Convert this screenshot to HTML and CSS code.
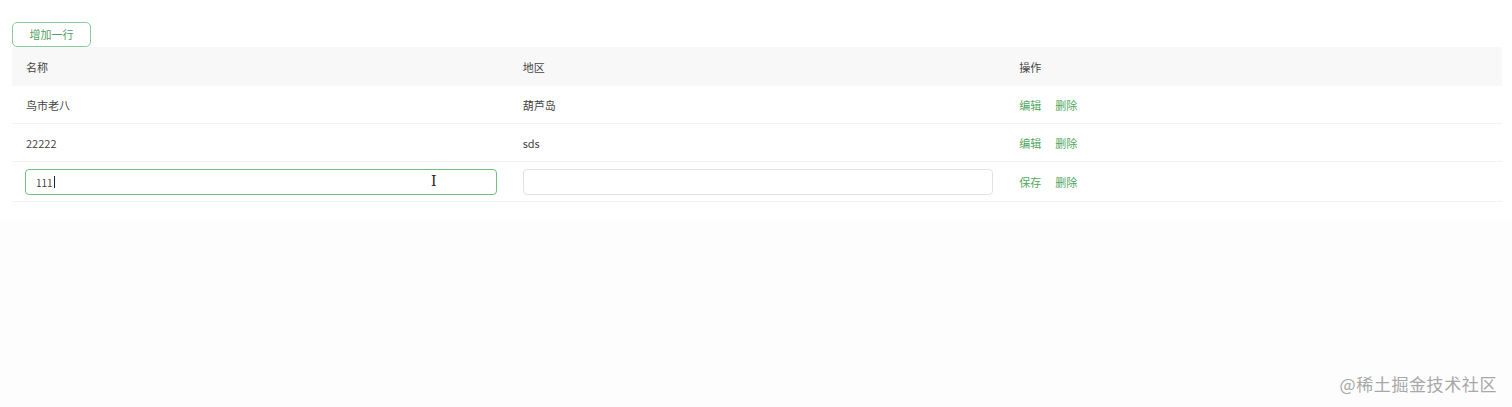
FILE: index.html
```html
<!DOCTYPE html>
<html lang="zh">
<head>
<meta charset="utf-8">
<link rel="stylesheet" href="styles.css">
</head>
<body>
<div class="card">
  <button class="add-btn">增加一行</button>
  <table class="grid">
    <thead>
      <tr><th>名称</th><th>地区</th><th>操作</th></tr>
    </thead>
    <tbody>
      <tr><td>鸟市老八</td><td>葫芦岛</td><td><span class="op">编辑</span><span class="op">删除</span></td></tr>
      <tr><td>22222</td><td>sds</td><td><span class="op">编辑</span><span class="op">删除</span></td></tr>
      <tr class="edit-row">
        <td><div class="input focus"><span class="val">111</span><span class="caret"></span><span class="ibeam">I</span></div></td>
        <td><div class="input plain"></div></td>
        <td><span class="op">保存</span><span class="op">删除</span></td>
      </tr>
    </tbody>
  </table>
</div>
<div class="watermark">@稀土掘金技术社区</div>
</body>
</html>
```
FILE: styles.css
```css
html, body {
  margin: 0;
  padding: 0;
  background: #fdfdfd;
  font-family: "Noto Sans CJK SC", "Noto Sans", sans-serif;
  color: #444;
}
.card {
  background: #fff;
  height: 221px;
  padding: 22px 10px 0 12px;
  box-sizing: border-box;
  box-shadow: 0 2px 1px rgba(0,0,0,0.05), 0 5px 4px rgba(0,0,0,0.05);
}
.add-btn {
  display: block;
  width: 79px;
  height: 25px;
  border: 1px solid #8dcb98;
  border-radius: 5px;
  background: #fff;
  color: #4f9f5e;
  font-family: inherit;
  font-size: 11px;
  padding: 0;
  line-height: 23px;
}
.grid {
  width: 1490px;
  border-collapse: collapse;
  table-layout: fixed;
  font-size: 11px;
}
.grid th {
  background: #f8f8f8;
  height: 39px;
  text-align: left;
  font-weight: normal;
  padding: 0 14px;
  color: #444;
}
.grid td {
  height: 37px;
  padding: 0 14px;
  border-bottom: 1px solid #f3f3f3;
  color: #444;
}
.grid .edit-row td {
  height: 38px;
  padding-top: 1px;
}
.op {
  color: #52a862;
  margin-right: 14px;
}
.input {
  border: 1px solid #e2e2e2;
  border-radius: 4px;
  position: relative;
  display: flex;
  align-items: center;
  padding-left: 10px;
  box-sizing: border-box;
  height: 26px;
}
.input.focus {
  border-color: #72c081;
  width: 472px;
  margin-left: -1px;
}
.input.plain {
  width: 470px;
}
.val {
  font-size: 10px;
  color: #444;
}
.caret {
  width: 1px;
  height: 12px;
  background: #222;
  margin-left: 1px;
}
.ibeam {
  position: absolute;
  left: 405px;
  top: 3px;
  font-family: "DejaVu Serif", serif;
  font-size: 14px;
  line-height: 16px;
  color: #222;
}
.watermark {
  position: absolute;
  right: 15px;
  top: 371px;
  font-size: 17px;
  color: #a8a8a8;
  letter-spacing: 0.6px;
}
```
